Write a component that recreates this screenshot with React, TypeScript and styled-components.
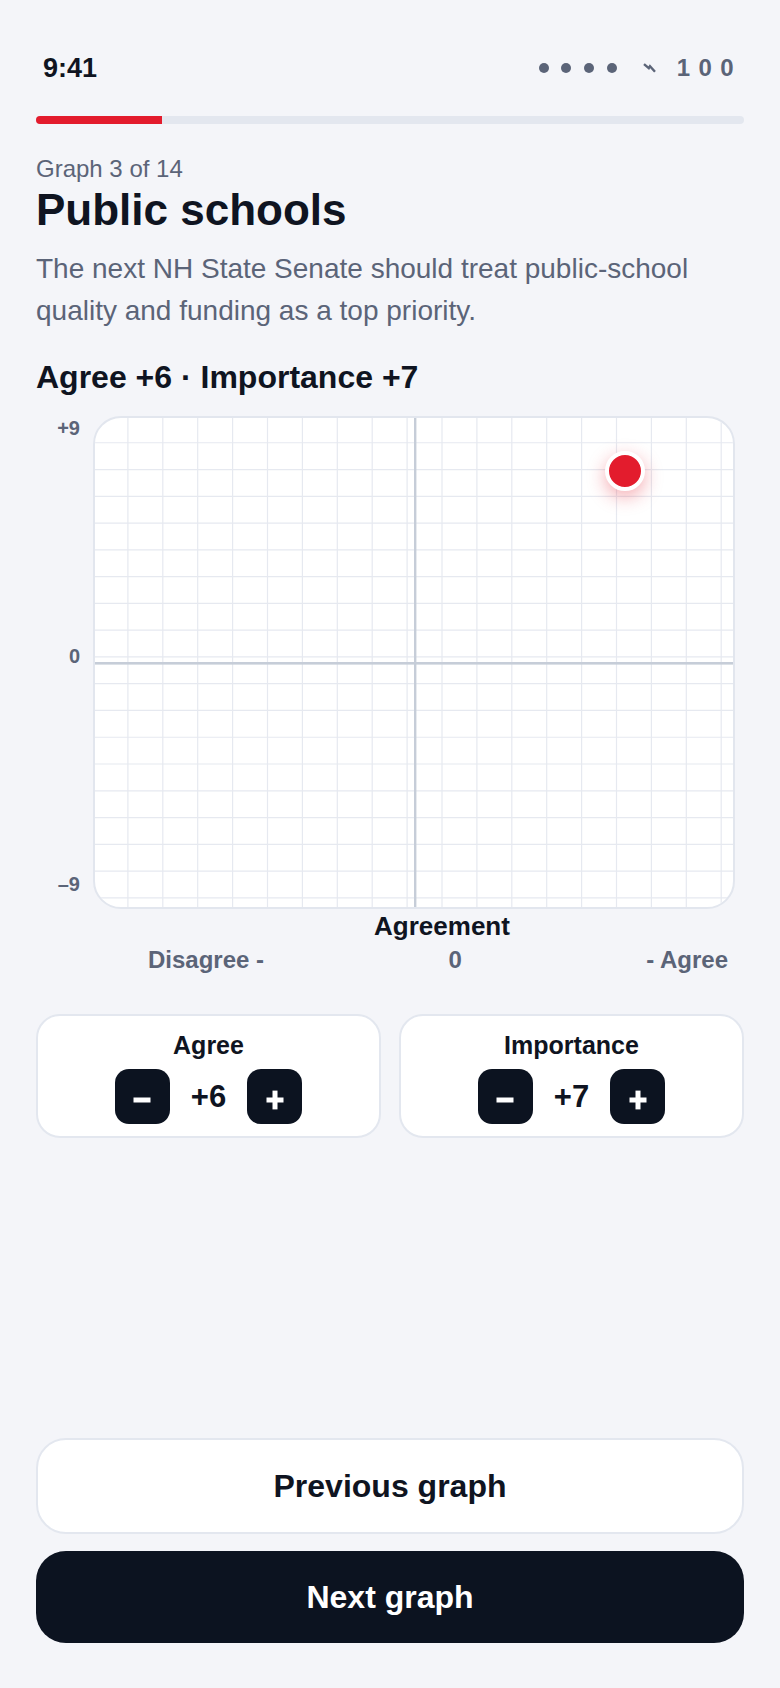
import { FC } from 'react';
import styled, { createGlobalStyle } from 'styled-components';

const GlobalStyle = createGlobalStyle`
  * {
    box-sizing: border-box;
  }

  body {
    margin: 0;
    background: #f4f5f9;
    font-family: 'Liberation Sans', Arial, sans-serif;
    color: #0f1421;
  }
`;

const UNIT_X = 35;
const UNIT_Y = 27.57;
const PLOT_W = 638;
const PLOT_H = 489;
const AXIS_X = 320;
const AXIS_Y = 246;

const agree = 6;
const importance = 7;

export default function App() {
  return (
    <>
      <GlobalStyle />
      <Page>
        <StatusBar>
          <Time>9:41</Time>
          <StatusRight>
            <Signal>
              <SignalDot />
              <SignalDot />
              <SignalDot />
              <SignalDot />
            </Signal>
            <svg width="13" height="10" viewBox="0 0 13 10">
              <path
                d="M1 1.2 L5.8 5.2 L7 3.2 L12 8.8"
                fill="none"
                stroke="#5b6478"
                strokeWidth="2.4"
                strokeLinejoin="miter"
              />
            </svg>
            <Battery>100</Battery>
          </StatusRight>
        </StatusBar>

        <Progress>
          <ProgressFill style={{ width: `${(2.5 / 14) * 100}%` }} />
        </Progress>

        <Eyebrow>Graph 3 of 14</Eyebrow>
        <Title>Public schools</Title>
        <Statement>
          The next NH State Senate should treat public-school quality and
          funding as a top priority.
        </Statement>

        <Readout>
          Agree +{agree} · Importance +{importance}
        </Readout>

        <ChartRow>
          <YAxis>
            <YLabel>+9</YLabel>
            <YLabel>0</YLabel>
            <YLabel>–9</YLabel>
          </YAxis>
          <Plot>
            <Grid />
            <Marker
              style={{
                left: AXIS_X + agree * UNIT_X,
                top: AXIS_Y - importance * UNIT_Y,
              }}
            />
          </Plot>
        </ChartRow>

        <XAxis>
          <XTitle>Agreement</XTitle>
          <XLabels>
            <span>Disagree -</span>
            <span>0</span>
            <span>- Agree</span>
          </XLabels>
        </XAxis>

        <Controls>
          <Stepper label="Agree" value={agree} />
          <Stepper label="Importance" value={importance} />
        </Controls>

        <Footer>
          <SecondaryButton>Previous graph</SecondaryButton>
          <PrimaryButton>Next graph</PrimaryButton>
        </Footer>
      </Page>
    </>
  );
}

const Grid: FC = () => {
  const cols = Array.from({ length: 18 }, (_, i) => (i + 1) * 34.9 - 2);
  const rows = Array.from({ length: 18 }, (_, i) => (i + 1) * 26.77 - 2);
  return (
    <svg width={PLOT_W} height={PLOT_H} viewBox={`0 0 ${PLOT_W} ${PLOT_H}`}>
      {cols.map((x) => (
        <line key={`c${x}`} x1={x} y1={0} x2={x} y2={PLOT_H} stroke="#e6e9f0" strokeWidth="1.2" />
      ))}
      {rows.map((y) => (
        <line key={`r${y}`} x1={0} y1={y} x2={PLOT_W} y2={y} stroke="#e6e9f0" strokeWidth="1.2" />
      ))}
      <rect x={AXIS_X - 1} y={0} width={2.4} height={PLOT_H} fill="#c6cdd8" />
      <rect x={0} y={AXIS_Y - 2} width={PLOT_W} height={2.6} fill="#c6cdd8" />
    </svg>
  );
};

// glyphs sit ~3px below the button centre, as in the mock
const MinusIcon: FC = () => (
  <svg width="18" height="26" viewBox="0 0 18 26">
    <rect x="0.5" y="13.5" width="17" height="5" fill="#fff" />
  </svg>
);

const PlusIcon: FC = () => (
  <svg width="18" height="26" viewBox="0 0 18 26">
    <rect x="0.5" y="13.5" width="17" height="5" fill="#fff" />
    <rect x="6.5" y="6.6" width="5" height="18.8" fill="#fff" />
  </svg>
);

type StepperProps = { label: string; value: number };

const Stepper: FC<StepperProps> = ({ label, value }) => {
  return (
    <Card>
      <CardLabel>{label}</CardLabel>
      <StepRow>
        <StepButton aria-label={`Decrease ${label}`}>
          <MinusIcon />
        </StepButton>
        <StepValue>
          {value > 0 ? '+' : ''}
          {value}
        </StepValue>
        <StepButton aria-label={`Increase ${label}`}>
          <PlusIcon />
        </StepButton>
      </StepRow>
    </Card>
  );
};

const Page = styled.div`
  min-height: 100vh;
  display: flex;
  flex-direction: column;
  padding: 54px 36px 45px;
`;

const StatusBar = styled.div`
  display: flex;
  align-items: center;
  justify-content: space-between;
  height: 28px;
  padding: 0 8px 0 7px;
`;

const Time = styled.span`
  font-size: 27px;
  font-weight: 700;
  line-height: 28px;
  color: #0f1421;
`;

const StatusRight = styled.div`
  display: flex;
  align-items: center;
  gap: 21px;
  color: #5b6478;
`;

const Signal = styled.div`
  display: flex;
  gap: 12.7px;
  margin-right: 5px;
`;

const SignalDot = styled.span`
  width: 10px;
  height: 10px;
  border-radius: 50%;
  background: #5b6478;
`;

const Battery = styled.span`
  font-size: 24px;
  font-weight: 700;
  letter-spacing: 8.4px;
  line-height: 28px;
  margin-right: -6px;
`;

const Progress = styled.div`
  margin-top: 34px;
  height: 8px;
  border-radius: 4px;
  background: #e3e7ef;
  overflow: hidden;
`;

const ProgressFill = styled.div`
  height: 100%;
  background: #e31c2d;
`;

const Eyebrow = styled.div`
  margin-top: 30px;
  font-size: 24px;
  line-height: 29px;
  color: #5b6478;
`;

const Title = styled.h1`
  margin: 2px 0 0;
  font-size: 44px;
  line-height: 50px;
  font-weight: 700;
  color: #0f1421;
`;

const Statement = styled.p`
  margin: 13px 0 0;
  font-size: 28px;
  line-height: 42px;
  color: #5b6478;
`;

const Readout = styled.h2`
  margin: 27px 0 0;
  font-size: 32px;
  line-height: 37px;
  font-weight: 700;
  color: #0f1421;
`;

const ChartRow = styled.div`
  margin-top: 20px;
  display: grid;
  grid-template-columns: 44px 642px;
  column-gap: 13px;
`;

const YAxis = styled.div`
  display: flex;
  flex-direction: column;
  justify-content: space-between;
  align-items: flex-end;
  padding: 2px 0 14px;
`;

const YLabel = styled.span`
  font-size: 20px;
  line-height: 21px;
  font-weight: 700;
  color: #5b6478;
`;

const Plot = styled.div`
  position: relative;
  height: 493px;
  border: 2px solid #e2e6ee;
  border-radius: 28px;
  background: #fff;
  overflow: hidden;

  svg {
    display: block;
  }
`;

const Marker = styled.div`
  position: absolute;
  width: 40px;
  height: 40px;
  border-radius: 50%;
  border: 4px solid #fff;
  background: #e31c2d;
  transform: translate(-50%, -50%);
  box-shadow: 0 6px 18px rgba(227, 28, 45, 0.36);
`;

const XAxis = styled.div`
  padding: 0 8px 0 112px;
`;

const XTitle = styled.div`
  margin-top: 2px;
  text-align: center;
  font-size: 26px;
  line-height: 30px;
  font-weight: 700;
  color: #0f1421;
`;

const XLabels = styled.div`
  margin-top: 5px;
  display: flex;
  justify-content: space-between;
  padding-right: 8px;
  font-size: 24px;
  line-height: 28px;
  font-weight: 700;
  color: #5b6478;
`;

const Controls = styled.div`
  margin-top: 40px;
  display: grid;
  grid-template-columns: 1fr 1fr;
  gap: 18px;
`;

const Card = styled.div`
  border: 2px solid #e3e7ef;
  border-radius: 24px;
  background: #fff;
  padding: 15px 12px 12px;
  display: flex;
  flex-direction: column;
  align-items: center;
  gap: 9px;
`;

const CardLabel = styled.div`
  font-size: 25px;
  line-height: 29px;
  font-weight: 700;
  color: #0f1421;
`;

const StepRow = styled.div`
  display: flex;
  align-items: center;
  gap: 21px;
`;

const StepButton = styled.button`
  width: 55px;
  height: 55px;
  border: none;
  border-radius: 14px;
  background: #0c1320;
  padding: 0;
  display: flex;
  align-items: center;
  justify-content: center;

  svg {
    display: block;
  }
`;

const StepValue = styled.span`
  font-size: 31px;
  font-weight: 700;
  line-height: 36px;
  color: #0f1421;
`;

const Footer = styled.div`
  margin-top: auto;
  display: flex;
  flex-direction: column;
  gap: 17px;
`;

const SecondaryButton = styled.button`
  height: 96px;
  border: 2px solid #e3e7ef;
  border-radius: 30px;
  background: #fff;
  color: #0f1421;
  font-family: inherit;
  font-size: 32px;
  font-weight: 700;
`;

const PrimaryButton = styled.button`
  height: 92px;
  border: none;
  border-radius: 30px;
  background: #0c1320;
  color: #fff;
  font-family: inherit;
  font-size: 32px;
  font-weight: 700;
`;
